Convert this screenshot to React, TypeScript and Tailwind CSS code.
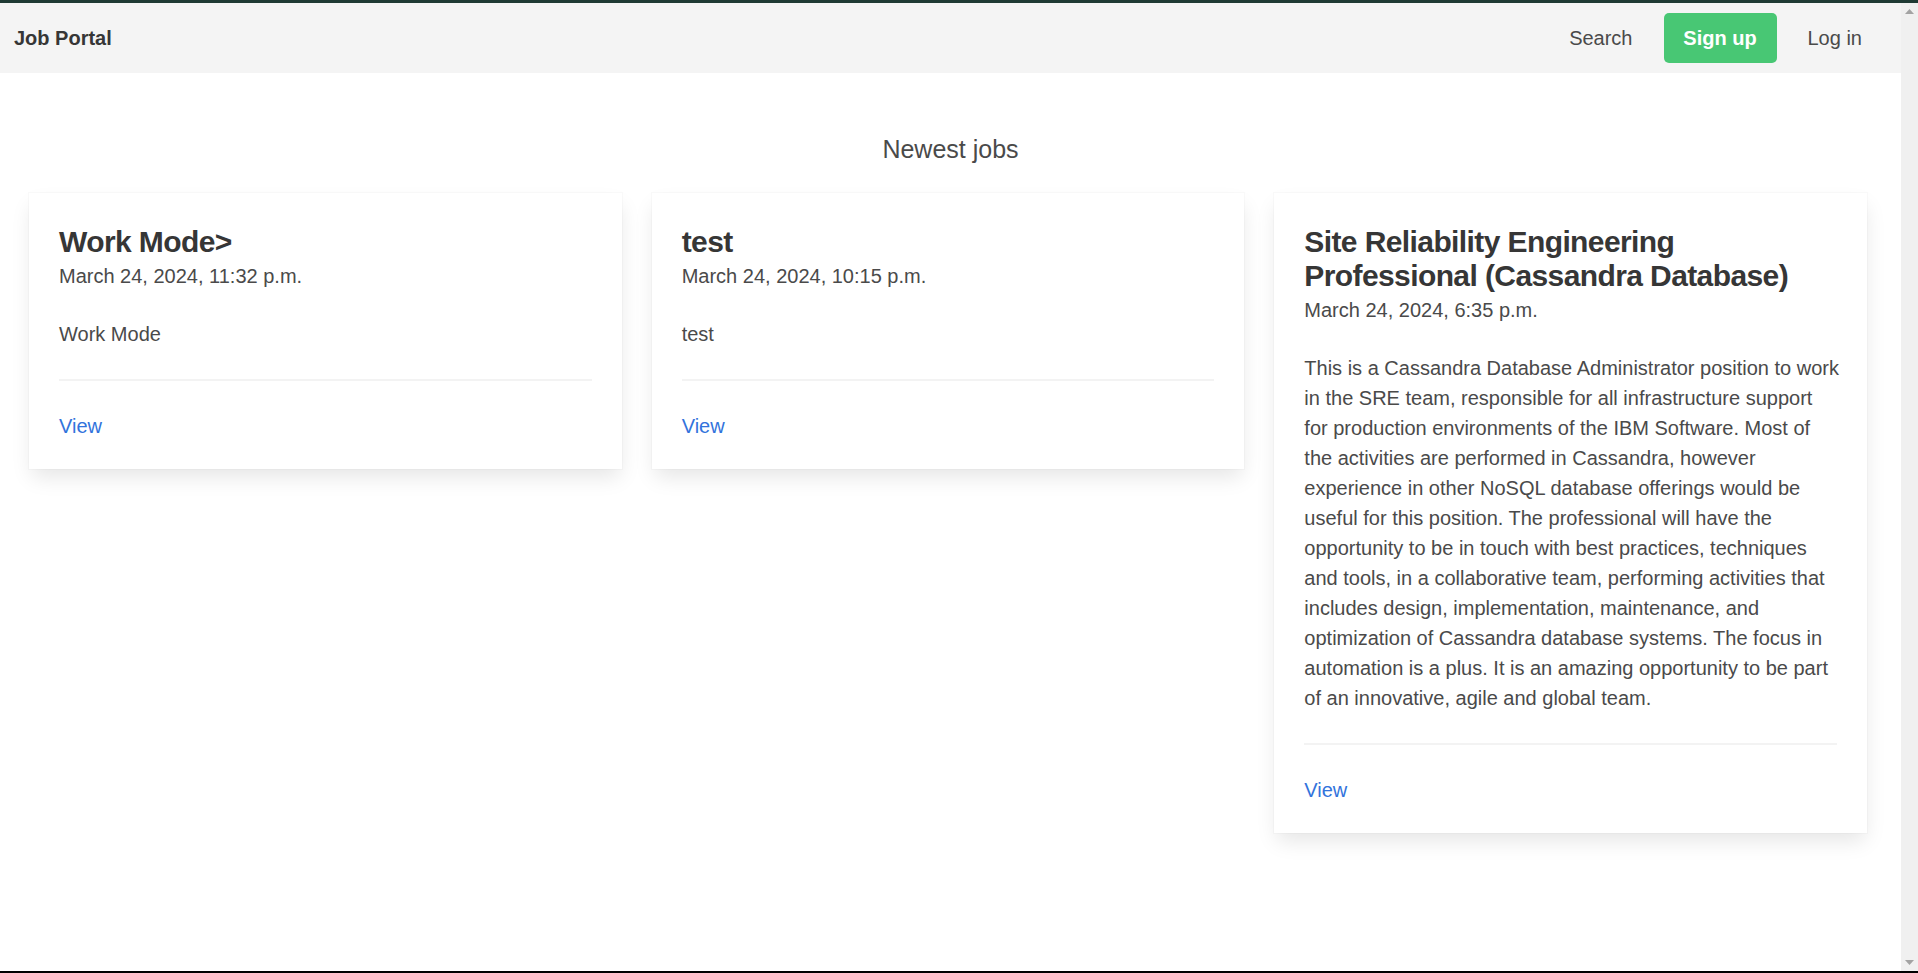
import React from "react";

const font = { fontFamily: '"Liberation Sans", Arial, sans-serif' };

type Job = { title: string[]; date: string; body: string[] };

const jobs: Job[] = [
  { title: ["Work Mode>"], date: "March 24, 2024, 11:32 p.m.", body: ["Work Mode"] },
  { title: ["test"], date: "March 24, 2024, 10:15 p.m.", body: ["test"] },
  {
    title: ["Site Reliability Engineering", "Professional (Cassandra Database)"],
    date: "March 24, 2024, 6:35 p.m.",
    body: [
      "This is a Cassandra Database Administrator position to work",
      "in the SRE team, responsible for all infrastructure support",
      "for production environments of the IBM Software. Most of",
      "the activities are performed in Cassandra, however",
      "experience in other NoSQL database offerings would be",
      "useful for this position. The professional will have the",
      "opportunity to be in touch with best practices, techniques",
      "and tools, in a collaborative team, performing activities that",
      "includes design, implementation, maintenance, and",
      "optimization of Cassandra database systems. The focus in",
      "automation is a plus. It is an amazing opportunity to be part",
      "of an innovative, agile and global team.",
    ],
  },
];

function Card({ job }: { job: Job }) {
  return (
    <div className="bg-white px-[30px] pt-[32px] pb-[28px] shadow-[0_10px_20px_-2.5px_rgba(10,10,10,0.1),0_0_0_1px_rgba(10,10,10,0.02)]">
      <h3 className="text-[30px] leading-[33.75px] font-bold tracking-[-0.6px] text-[#363636]">
        {job.title.map((t, i) => (
          <span key={i} className="block whitespace-nowrap">
            {t}
          </span>
        ))}
      </h3>
      <p className="mt-[5px] text-[20px] leading-[25px] text-[#4a4a4a]">{job.date}</p>
      <p className="mt-[30px] text-[20px] leading-[30px] text-[#4a4a4a]">
        {job.body.map((t, i) => (
          <span key={i} className="block whitespace-nowrap">
            {t}
          </span>
        ))}
      </p>
      <div className="my-[30px] h-[2.5px] bg-[#f3f3f3]" />
      <a href="#" className="block text-[20px] leading-[30px] text-[#3273dc]">
        View
      </a>
    </div>
  );
}

export default function App() {
  return (
    <div className="h-[973px] w-full overflow-hidden flex flex-col bg-white" style={font}>
      <div className="h-[3px] bg-[#1f3a34] shrink-0" />
      <div className="flex-1 flex min-h-0">
        <div className="flex-1 min-w-0">
          <nav className="h-[70px] bg-[#f4f4f4] flex items-center justify-between pl-[14px] pr-[39px]">
            <span className="text-[20px] font-bold text-[#363636]">Job Portal</span>
            <div className="flex items-center gap-[31px] text-[20px] text-[#4a4a4a]">
              <span>Search</span>
              <button className="w-[113px] h-[50px] rounded-[5px] bg-[#48c774] text-white font-bold text-[20px]">
                Sign up
              </button>
              <span>Log in</span>
            </div>
          </nav>
          <main className="pt-[61px]">
            <h2 className="text-center text-[25px] leading-[31px] text-[#4a4a4a]">Newest jobs</h2>
            <div className="mt-[28px] grid grid-cols-3 gap-[30px] items-start pl-[29px] pr-[34px]">
              {jobs.map((j, i) => (
                <Card key={i} job={j} />
              ))}
            </div>
          </main>
        </div>
        <div className="w-[17px] shrink-0 bg-[#f0f0f0] flex flex-col items-center justify-between pt-[6px] pb-[6px]">
          <svg width="9" height="5" viewBox="0 0 9 5">
            <polygon points="4.5,0 9,5 0,5" fill="#a3a3a3" />
          </svg>
          <svg width="9" height="5" viewBox="0 0 9 5">
            <polygon points="0,0 9,0 4.5,5" fill="#a3a3a3" />
          </svg>
        </div>
      </div>
      <div className="h-[2px] bg-black shrink-0" />
    </div>
  );
}
